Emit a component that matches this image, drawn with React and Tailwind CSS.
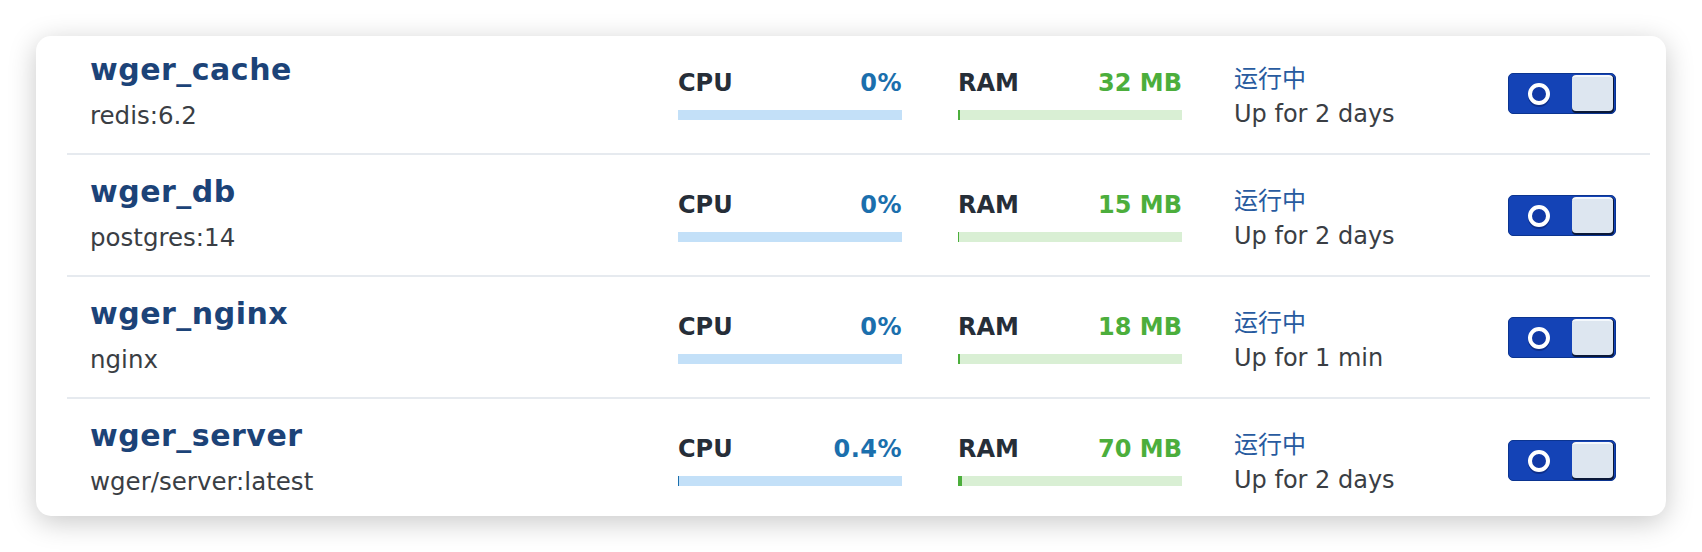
const containers = [
  { name: 'wger_cache', image: 'redis:6.2', cpu: '0%', cpuFill: 0, ram: '32 MB', ramFill: 2, up: 'Up for 2 days' },
  { name: 'wger_db', image: 'postgres:14', cpu: '0%', cpuFill: 0, ram: '15 MB', ramFill: 1, up: 'Up for 2 days' },
  { name: 'wger_nginx', image: 'nginx', cpu: '0%', cpuFill: 0, ram: '18 MB', ramFill: 2, up: 'Up for 1 min' },
  { name: 'wger_server', image: 'wger/server:latest', cpu: '0.4%', cpuFill: 1, ram: '70 MB', ramFill: 4, up: 'Up for 2 days' },
]

function Toggle() {
  return (
    <div className="relative w-[108px] h-[41px] rounded-[5px] bg-[#1443b6] border border-[#0b3490]">
      {/* ring */}
      <div className="absolute left-[19px] top-[10px] w-[22px] h-[22px] rounded-full bg-[#0d2f8c] translate-y-[1px]" />
      <div className="absolute left-[19px] top-[9px] w-[22px] h-[22px] rounded-full border-[4px] border-white bg-[#1139a6]" />
      {/* knob */}
      <div className="absolute right-[1px] top-[1px] w-[42px] h-[38px] rounded-[4px] bg-[#0a1838]">
        <div className="w-[41px] h-[36px] rounded-[4px] bg-[#dde6f0] border-t-2 border-[#f4f8fc]" />
      </div>
    </div>
  )
}

function Row({ c, last }) {
  return (
    <div className={`flex h-[122px] pl-[23px] pr-[34px] ${last ? '' : 'border-b-2 border-[#e6eaef]'}`}>
      <div className="w-[588px] pt-[20px]">
        <div className="text-[30px] leading-[34px] font-bold tracking-[0.5px] text-[#1c4378]">{c.name}</div>
        <div className="mt-[14px] text-[24.5px] leading-[30px] text-[#3a3e44]">{c.image}</div>
      </div>

      <div className="w-[224px] pt-[35px]">
        <div className="flex justify-between text-[24px] leading-[30px] font-bold">
          <span className="text-[#262e38]">CPU</span>
          <span className="text-[#1b6fad] tracking-[0.5px]">{c.cpu}</span>
        </div>
        <div className="mt-[12px] h-[10px] bg-[#c3e0f8]">
          <div className="h-full bg-[#1b6fad]" style={{ width: c.cpuFill }} />
        </div>
      </div>

      <div className="w-[224px] ml-[56px] pt-[35px]">
        <div className="flex justify-between text-[24px] leading-[30px] font-bold">
          <span className="text-[#262e38]">RAM</span>
          <span className="text-[#4cae3c]">{c.ram}</span>
        </div>
        <div className="mt-[12px] h-[10px] bg-[#d9efd4]">
          <div className="h-full bg-[#4cae3c]" style={{ width: c.ramFill }} />
        </div>
      </div>

      <div className="w-[274px] ml-[52px] pt-[31px]">
        <div className="text-[24px] leading-[30px] text-[#285b9f]">运行中</div>
        <div className="mt-[5px] text-[24px] leading-[30px] text-[#3a3e44]">{c.up}</div>
      </div>

      <div className="flex items-center">
        <Toggle />
      </div>
    </div>
  )
}

export default function App() {
  return (
    <div className="w-[1702px] h-[552px] bg-white pt-[36px] pl-[36px] font-['DejaVu_Sans','Noto_Sans_CJK_SC',sans-serif]">
      <div className="w-[1630px] h-[480px] bg-white rounded-[15px] overflow-hidden shadow-[0_6px_28px_rgba(0,0,0,0.22)] pl-[31px] pr-[16px]">
        <div className="-mt-[3px]">
          {containers.map((c, i) => (
            <Row key={c.name} c={c} last={i === containers.length - 1} />
          ))}
        </div>
      </div>
    </div>
  )
}
